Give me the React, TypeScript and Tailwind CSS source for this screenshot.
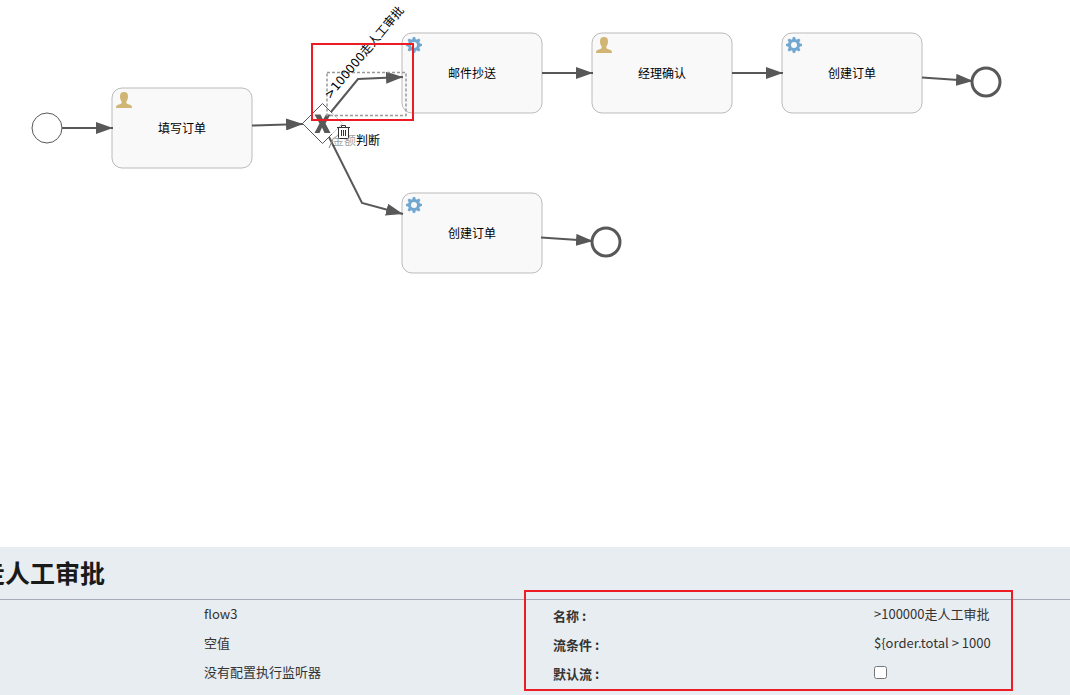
const CJK = "font-['Noto_Sans_CJK_SC',sans-serif]";

type Kind = 'user' | 'service';

function UserIcon() {
  return (
    <svg className="block size-4" viewBox="0 0 16 16" aria-hidden="true">
      <path
        fill="#d1b575"
        d="M8 0C5.200 0 4 1.500 4 4.200C4 6.800 4.600 8.200 5.600 9.200V10.800C5.600 11.300 5.200 11.600 4.400 11.900L1.500 13C.5 13.400 0 14.200 0 16H16C16 14.200 15.500 13.400 14.500 13L11.600 11.900C10.800 11.600 10.400 11.300 10.400 10.800V9.200C11.400 8.200 12 6.800 12 4.200C12 1.500 10.800 0 8 0Z"
      />
    </svg>
  );
}

function GearIcon() {
  return (
    <svg className="block size-4" viewBox="0 0 16 16" aria-hidden="true">
      <g fill="#72a7d0">
        {[0, 45, 90, 135].map((angle) => (
          <path key={angle} d="M6.900 0H9.100L9.900 3V13L9.100 16H6.900L6.100 13V3Z" transform={`rotate(${angle} 8 8)`} />
        ))}
        <circle cx="8" cy="8" r="6" />
      </g>
      <circle cx="8" cy="8" r="3" fill="#f9f9f9" />
    </svg>
  );
}

function Task({ label, kind, place }: { label: string; kind: Kind; place: string }) {
  return (
    <div className={`absolute flex h-[82px] w-[142px] items-center justify-center text-xs text-black ${place}`}>
      <svg className="absolute inset-0 h-full w-full" viewBox="0 0 142 82" aria-hidden="true">
        <rect x="1" y="1" width="140" height="80" rx="10" fill="#f9f9f9" stroke="#bbbbbb" />
      </svg>
      <span className="absolute top-[5px] left-[5px]">{kind === 'user' ? <UserIcon /> : <GearIcon />}</span>
      <span className="relative">{label}</span>
    </div>
  );
}

function Connections() {
  return (
    <svg className="absolute top-0 left-0 h-full w-full" aria-hidden="true">
      <defs>
        <marker id="arrow" markerUnits="userSpaceOnUse" markerWidth="17" markerHeight="12" refX="17" refY="6" orient="auto">
          <path d="M0 0L17 6L0 12Z" fill="#585858" />
        </marker>
      </defs>
      <circle cx="47" cy="128" r="15" fill="#fff" stroke="#585858" />
      <circle cx="986" cy="82" r="14" fill="#fff" stroke="#585858" strokeWidth="3" />
      <circle cx="606" cy="242" r="14" fill="#fff" stroke="#585858" strokeWidth="3" />
      <path d="M302.500 123.500L322.500 103.500L342.500 123.500L322.500 143.500Z" fill="#fff" stroke="#585858" />
      <path
        d="M314.500 114.500H320.500L323 119.500L326 114.500H330.500L325.500 123.500L330.500 133H324.500L322 127.500L319.500 133H314.500L319.500 123.500Z"
        fill="#585858"
      />
      <rect x="332" y="112" width="14" height="25" fill="#fff" fillOpacity="0.7" />
      <g fill="none" stroke="#585858" strokeWidth="2">
        <path d="M62 128H113" markerEnd="url(#arrow)" />
        <path d="M252 125.500L303 124" markerEnd="url(#arrow)" />
        <path d="M331 112L358 79L403 77" markerEnd="url(#arrow)" />
        <path d="M329 137L362 203L403 214" markerEnd="url(#arrow)" />
        <path d="M542 73H593" markerEnd="url(#arrow)" />
        <path d="M732 73H783" markerEnd="url(#arrow)" />
        <path d="M922 77.500L973 81" markerEnd="url(#arrow)" />
        <path d="M541 237.500L593 241" markerEnd="url(#arrow)" />
      </g>
      <path d="M329 148L333 139" stroke="#888" />
      <rect x="327" y="72.500" width="79" height="43" fill="none" stroke="#999" strokeWidth="1.500" strokeDasharray="3 2" />
    </svg>
  );
}

function TrashIcon() {
  return (
    <svg className="block h-4 w-[13px]" viewBox="0 0 13 16" fill="none" stroke="#333" aria-hidden="true">
      <path d="M1.500 4V13.500Q1.500 14.500 2.500 14.500H10.500Q11.500 14.500 11.500 13.500V4" fill="#fff" />
      <path d="M0 3.500H13M4.500 3V1.500H8.500V3" />
      <path d="M4.500 6V12M6.500 6V12M8.500 6V12" />
    </svg>
  );
}

export default function App() {
  return (
    <div className={`flex min-h-screen flex-col overflow-hidden bg-white ${CJK}`}>
      <main className="relative min-h-[547px] flex-1 overflow-hidden">
        <Task label="填写订单" kind="user" place="left-[111px] top-[87px]" />
        <Task label="邮件抄送" kind="service" place="left-[401px] top-[32px]" />
        <Task label="经理确认" kind="user" place="left-[591px] top-[32px]" />
        <Task label="创建订单" kind="service" place="left-[781px] top-[32px]" />
        <Task label="创建订单" kind="service" place="left-[401px] top-[192px]" />
        <Connections />
        <span className="absolute top-[132px] left-[332px] text-xs text-black">
          <span className="text-black/40">金额</span>判断
        </span>
        <span className="absolute top-[86px] left-[333px] origin-bottom-left -rotate-50 font-['DejaVu_Sans','Noto_Sans_CJK_SC',sans-serif] text-xs whitespace-nowrap text-black">
          &gt;100000走人工审批
        </span>
        <button type="button" aria-label="删除" className="absolute top-[124px] left-[337px]">
          <TrashIcon />
        </button>
        <div className="absolute top-[43px] left-[311px] h-[78px] w-[103px] border-2 border-[#ed1c24]" />
      </main>

      <section className="relative h-[148px] shrink-0 bg-[#e8edf1] text-[13px] leading-[29px] text-[#333333]">
        <header className="h-[53px] border-b border-[#a4acb9]">
          <h1 className="flex w-[105px] justify-end overflow-hidden text-[25px] leading-[50px] font-bold whitespace-nowrap text-[#1a1a1a]">
            走人工审批
          </h1>
        </header>
        <div className="-mt-px flex">
          <div className="w-[553px] shrink-0 pl-[204px]">
            <p>flow3</p>
            <p>空值</p>
            <p>没有配置执行监听器</p>
          </div>
          <dl className="flex-1">
            <div className="flex h-[29px]">
              <dt className="w-[321px] pt-0.5 font-bold">名称 :</dt>
              <dd>&gt;100000走人工审批</dd>
            </div>
            <div className="flex h-[29px]">
              <dt className="w-[321px] pt-0.5 font-bold">流条件 :</dt>
              <dd>{'${order.total > 1000'}</dd>
            </div>
            <div className="flex h-[29px]">
              <dt className="w-[321px] pt-0.5 font-bold">
                <label htmlFor="default-flow">默认流 :</label>
              </dt>
              <dd className="flex items-center pt-0.5">
                <input id="default-flow" type="checkbox" className="size-[13px]" />
              </dd>
            </div>
          </dl>
        </div>
        <div className="pointer-events-none absolute top-[43px] left-[524px] h-[101px] w-[489px] border-2 border-[#ed1c24]" />
      </section>
    </div>
  );
}
